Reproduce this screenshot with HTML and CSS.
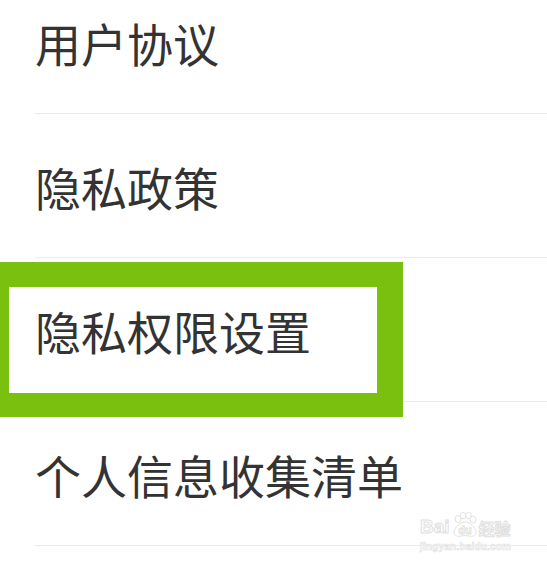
FILE: index.html
```html
<!DOCTYPE html>
<html lang="zh-CN">
<head>
<meta charset="utf-8">
<title>设置</title>
<link rel="stylesheet" href="styles.css">
</head>
<body>
<div class="page">
  <ul class="menu">
    <li class="item">用户协议</li>
    <li class="item">隐私政策</li>
    <li class="item">隐私权限设置</li>
    <li class="item">个人信息收集清单</li>
  </ul>
  <div class="highlight"></div>
  <div class="watermark">
    <div class="wm-top">
      <span class="wm-bai">Bai</span>
      <svg class="wm-paw" width="30" height="26" viewBox="0 0 30 26">
        <g fill="#fff" stroke="#e2e2e2" stroke-width="1">
          <ellipse cx="8" cy="7" rx="3" ry="3.6"/>
          <ellipse cx="13" cy="3.6" rx="2.8" ry="3.2"/>
          <ellipse cx="18.5" cy="3.6" rx="2.8" ry="3.2"/>
          <ellipse cx="23" cy="7.5" rx="3" ry="3.6"/>
          <path d="M15 10 C10 10 4 16 4 20 C4 24 8 25 11 24 C13 23.5 17 23.5 19 24 C22 25 26 24 26 20 C26 16 20 10 15 10 Z"/>
        </g>
        <text x="15" y="22" text-anchor="middle" class="wm-du">du</text>
      </svg>
      <span class="wm-jy">经验</span>
    </div>
    <div class="wm-url">jingyan.baidu.com</div>
  </div>
</div>
</body>
</html>
```
FILE: styles.css
```css
html, body {
  margin: 0;
  padding: 0;
  background: #ffffff;
}

body {
  width: 547px;
  height: 565px;
  overflow: hidden;
  font-family: "Noto Sans CJK SC", "Noto Sans", sans-serif;
}

.page {
  position: relative;
  width: 547px;
  height: 565px;
  overflow: hidden;
}

.menu {
  list-style: none;
  margin: -30px 0 0 35px;
  padding: 0;
}

.item {
  box-sizing: border-box;
  height: 144px;
  display: flex;
  align-items: center;
  border-bottom: 1px solid #ececec;
  font-size: 46px;
  line-height: 1;
  color: #333333;
  padding-left: 0;
}

.highlight {
  position: absolute;
  left: 0;
  top: 262px;
  width: 368px;
  height: 106px;
  border-style: solid;
  border-color: #79c00f;
  border-width: 25px 26px 24px 9px;
}

.watermark {
  position: absolute;
  left: 420px;
  top: 508px;
  width: 100px;
  color: #fff;
  font-family: "Liberation Sans", Arial, sans-serif;
}

.wm-top {
  display: flex;
  align-items: flex-end;
  height: 30px;
}

.wm-bai {
  font-size: 19px;
  font-weight: bold;
  line-height: 1;
  color: #fff;
  -webkit-text-stroke: 1px #e0e0e0;
  margin-bottom: 2px;
}

.wm-paw {
  display: block;
  margin: 0 -1px 0 0;
}

.wm-du {
  font-family: "Liberation Sans", Arial, sans-serif;
  font-size: 11px;
  font-weight: bold;
  fill: #fff;
  stroke: #e0e0e0;
  stroke-width: 0.8;
}

.wm-jy {
  font-family: "Noto Sans CJK SC", sans-serif;
  font-size: 16px;
  line-height: 1;
  font-weight: bold;
  color: #fff;
  -webkit-text-stroke: 1px #e0e0e0;
  margin-bottom: 2px;
}

.wm-url {
  font-size: 10px;
  line-height: 1;
  font-weight: bold;
  color: #fff;
  -webkit-text-stroke: 0.6px #e0e0e0;
  margin-top: 4px;
  letter-spacing: 0.2px;
}
```
